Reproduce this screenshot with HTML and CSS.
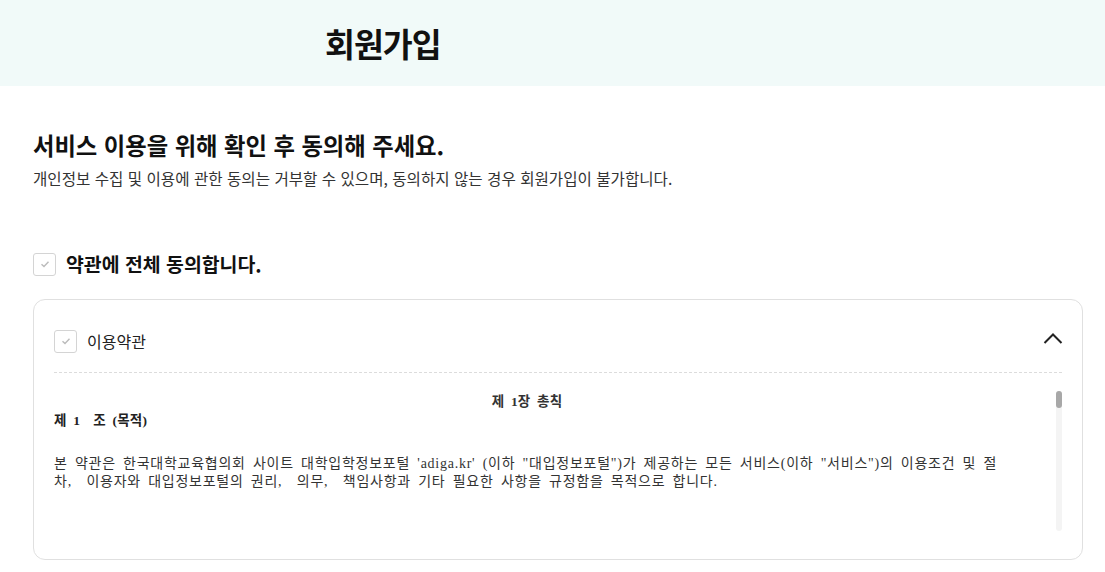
FILE: index.html
```html
<!DOCTYPE html>
<html lang="ko">
<head>
    <meta charset="UTF-8">
    <meta name="viewport" content="width=device-width, initial-scale=1.0">
    <title>회원가입</title>
    <link rel="stylesheet" href="styles.css">
</head>
<body>
    <!-- 상단 타이틀 -->
    <div class="page-head">
        <h1>회원가입</h1>
    </div>

    <div class="join-wrap">
        <h2 class="join-title">서비스 이용을 위해 확인 후 동의해 주세요.</h2>
        <p class="join-desc">개인정보 수집 및 이용에 관한 동의는 거부할 수 있으며, 동의하지 않는 경우 회원가입이 불가합니다.</p>

        <!-- 전체 동의 -->
        <label class="agree-all">
            <span class="chk">
                <svg viewBox="0 0 12 12" width="12" height="12"><path d="M2.5 6.2 L5 8.5 L9.5 3.8" fill="none" stroke="#bbb" stroke-width="1.4"/></svg>
            </span>
            약관에 전체 동의합니다.
        </label>

        <!-- 이용약관 -->
        <div class="terms-box">
            <div class="terms-head">
                <label class="terms-label">
                    <span class="chk">
                        <svg viewBox="0 0 12 12" width="12" height="12"><path d="M2.5 6.2 L5 8.5 L9.5 3.8" fill="none" stroke="#bbb" stroke-width="1.4"/></svg>
                    </span>
                    이용약관
                </label>
                <button class="toggle" type="button" aria-label="접기">
                    <svg viewBox="0 0 20 12" width="20" height="12"><path d="M1.5 11 L10 2.5 L18.5 11" fill="none" stroke="#222" stroke-width="2"/></svg>
                </button>
            </div>
            <div class="terms-body">
                <div class="terms-scroll">
                    <div class="terms-text">
                        <p class="chapter">제 1장 총칙</p>
                        <p class="article">제 1&nbsp; 조 (목적)</p>
                        <p class="para">본 약관은 한국대학교육협의회 사이트 대학입학정보포털 'adiga.kr' (이하 "대입정보포털")가 제공하는 모든 서비스(이하 "서비스")의 이용조건 및 절<br>차, &nbsp;이용자와 대입정보포털의 권리, &nbsp;의무, &nbsp;책임사항과 기타 필요한 사항을 규정함을 목적으로 합니다.</p>
                        <p class="article">제 2&nbsp; 조 (약관의 효력 및 변경)</p>
                        <p class="para">① 본 약관은 서비스를 이용하고자 하는 모든 이용자에 대하여 그 효력을 발생합니다.</p>
                        <p class="para">② 본 약관의 내용은 서비스 화면에 게시하거나 기타의 방법으로 이용자에게 공지하고, 이용자가 본 약관에 동의함으로써 효력이 발생합니다.</p>
                        <p class="article">제 3&nbsp; 조 (약관 외 준칙)</p>
                        <p class="para">본 약관에 명시되지 않은 사항은 관계 법령 및 대입정보포털이 정한 서비스의 세부 이용지침 등의 규정에 따릅니다.</p>
                    </div>
                </div>
                <!-- 스크롤바 -->
                <div class="scroll-track"><span class="scroll-thumb"></span></div>
            </div>
        </div>
    </div>
</body>
</html>
```

FILE: styles.css
```css
body {
    margin: 0;
    padding: 0;
    font-family: "Noto Sans CJK KR", "Noto Sans", sans-serif;
    color: #111;
    background-color: #fff;
}
.page-head {
    background-color: #f1faf9;
    height: 86px;
    display: flex;
    align-items: center;
    padding-left: 325px;
}
.page-head h1 {
    margin: 0;
    font-size: 32.5px;
    font-weight: 700;
    letter-spacing: -1px;
    line-height: 1;
    color: #111;
}
.join-wrap {
    padding: 44px 22px 0 33px;
}
.join-title {
    margin: 0;
    font-size: 23.3px;
    font-weight: 700;
    line-height: 30px;
    color: #111;
}
.join-desc {
    margin: 8px 0 0;
    font-size: 15.6px;
    line-height: 20px;
    color: #333;
}
.chk {
    display: inline-flex;
    align-items: center;
    justify-content: center;
    width: 23px;
    height: 23px;
    border: 1px solid #d4d4d4;
    border-radius: 3px;
    background-color: #fff;
    box-sizing: border-box;
    flex-shrink: 0;
}
.agree-all {
    display: flex;
    align-items: center;
    gap: 10px;
    margin-top: 64px;
    font-size: 19.4px;
    font-weight: 700;
    line-height: 24px;
    color: #111;
    cursor: pointer;
}
.terms-box {
    margin-top: 23px;
    border: 1px solid #e0e0e0;
    border-radius: 12px;
    padding: 0 20px 28px 20px;
}
.terms-head {
    display: flex;
    justify-content: space-between;
    align-items: center;
    height: 73px;
    padding-top: 10px;
    box-sizing: border-box;
    border-bottom: 1px dashed #dcdcdc;
}
.terms-label {
    display: flex;
    align-items: center;
    gap: 10px;
    font-size: 16px;
    color: #222;
    cursor: pointer;
}
.toggle {
    border: none;
    background: none;
    padding: 0;
    margin-right: -1px;
    margin-top: -6px;
    cursor: pointer;
    display: flex;
}
.terms-body {
    margin-top: 18px;
    height: 140px;
    display: flex;
}
.terms-scroll {
    flex: 1;
    overflow: hidden;
}
.scroll-track {
    width: 6px;
    background-color: #f4f4f4;
    border-radius: 3px;
    flex-shrink: 0;
}
.scroll-thumb {
    display: block;
    height: 17px;
    background-color: #a8a8a8;
    border-radius: 3px;
}
.terms-text {
    width: 946px;
    font-family: "Liberation Serif", "Noto Sans CJK KR", serif;
    font-size: 14px;
    letter-spacing: 0.75px;
    word-spacing: 3px;
    line-height: 18px;
    color: #333;
}
.terms-text p {
    margin: 0;
}
.chapter {
    text-align: center;
    font-weight: 700;
    font-size: 13.5px;
    letter-spacing: 0.2px;
    padding-top: 2px;
}
.article {
    font-weight: 700;
    font-size: 13.5px;
    letter-spacing: 0.2px;
    margin-top: 1px !important;
    color: #222;
}
.para {
    margin-top: 25px !important;
}
.para + .para {
    margin-top: 0 !important;
}
.para + .article {
    margin-top: 48px !important;
}
```
